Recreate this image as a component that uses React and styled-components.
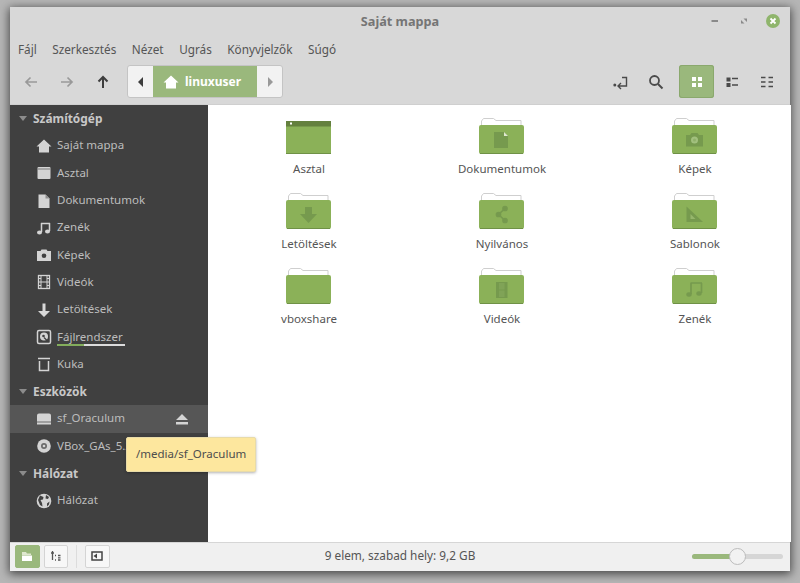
import React from "react";
import styled, { createGlobalStyle } from "styled-components";

const GlobalStyle = createGlobalStyle`
  html, body {
    margin: 0;
    height: 100%;
    overflow: hidden;
    background: #b6b6b6;
    font-family: "Noto Sans", sans-serif;
  }
`;

const GREEN = "#9ab87c";
const FOLDER = "#8bb158";
const FOLDER_EDGE = "#6f9146";
const MARK = "#769a4e";

// Window frame

const Window = styled.div`
  position: relative;
  display: flex;
  flex-direction: column;
  width: 780px;
  height: 564px;
  margin: 7px 10px 0;
  background: #d8d8d8;
  box-shadow: 0 2px 9px 1px rgba(0, 0, 0, 0.62);
`;

const TitleBar = styled.div`
  display: flex;
  align-items: center;
  justify-content: center;
  position: relative;
  height: 30px;
  padding-bottom: 2px;
  box-sizing: border-box;
  flex: none;
`;

const Title = styled.div`
  font-size: 12.7px;
  font-weight: 700;
  color: #757575;
`;

const WindowControls = styled.div`
  position: absolute;
  top: 5.5px;
  right: 9px;
  display: flex;
  align-items: center;
  gap: 13px;
`;

const MenuBar = styled.div`
  display: flex;
  align-items: center;
  gap: 15.5px;
  height: 23px;
  padding: 0 8px;
  flex: none;
`;

const MenuItem = styled.span`
  font-size: 11.75px;
  color: #555;
`;

// Toolbar

const Toolbar = styled.div`
  display: flex;
  align-items: center;
  height: 45px;
  padding: 0 6px 1px 3px;
  flex: none;
  box-sizing: border-box;
  border-bottom: 1px solid #cfcfcf;
`;

const NavButton = styled.div`
  display: flex;
  align-items: center;
  justify-content: center;
  width: 36px;
  height: 33px;
`;

const PathBar = styled.div`
  display: flex;
  height: 33px;
  margin-left: 6px;
  box-sizing: border-box;
  border: 1px solid #c4c4c4;
  border-radius: 3px;
  background: #f2f2f2;
  overflow: hidden;
`;

const PathArrow = styled.div`
  display: flex;
  align-items: center;
  justify-content: center;
  width: 25px;
`;

const PathCrumb = styled.div`
  display: flex;
  align-items: center;
  gap: 6px;
  width: 104px;
  padding-left: 10px;
  box-sizing: border-box;
  background: ${GREEN};
  color: #fff;
  font-size: 12px;
  font-weight: 700;
`;

const ToolSpacer = styled.div`
  flex: 1;
`;

const ToolButton = styled.div`
  display: flex;
  align-items: center;
  justify-content: center;
  width: 35px;
  height: 33px;
  margin-left: ${(p) => p.$gap || 0}px;
  border-radius: 3px;
  background: ${(p) => (p.$active ? GREEN : "transparent")};
  box-shadow: ${(p) => (p.$active ? "inset 0 0 0 1px #8aa86d" : "none")};
`;

// Sidebar

const Main = styled.div`
  display: flex;
  flex: 1;
  min-height: 0;
`;

const Sidebar = styled.div`
  width: 198px;
  flex: none;
  background: #404040;
  overflow: hidden;
`;

const SectionHead = styled.div`
  display: flex;
  align-items: center;
  gap: 6px;
  height: 27.3px;
  padding-left: 9px;
`;

const SectionLabel = styled.span`
  padding-bottom: 2px;
  font-size: 11.9px;
  font-weight: 700;
  color: #c8c8c8;
`;

const Caret = styled.div`
  width: 0;
  height: 0;
  border-left: 4.5px solid transparent;
  border-right: 4.5px solid transparent;
  border-top: 5px solid #8c8c8c;
`;

const Row = styled.div`
  display: flex;
  align-items: center;
  height: 27.3px;
  padding-left: 26px;
  padding-right: 19px;
  background: ${(p) => (p.$hover ? "#565656" : "transparent")};
  white-space: nowrap;
`;

const RowIcon = styled.div`
  display: flex;
  align-items: center;
  justify-content: center;
  width: 16px;
  height: 16px;
  margin-right: 5px;
  flex: none;
`;

const RowText = styled.div`
  flex: 1;
  position: relative;
  padding-bottom: 2px;
  font-size: 11.5px;
  color: #bdbdbd;
`;

const UsageBar = styled.div`
  position: absolute;
  left: 0;
  bottom: 0;
  width: 68px;
  height: 2px;
  background: linear-gradient(to right, #83ad5c 40%, #dcdcdc 40%);
`;

const Tooltip = styled.div`
  position: absolute;
  left: 116px;
  top: 430px;
  display: flex;
  align-items: center;
  width: 130px;
  height: 35px;
  padding: 0 0 2px 9px;
  box-sizing: border-box;
  background: #fde79e;
  border: 1px solid #e8dba8;
  border-radius: 2px;
  box-shadow: 0 1px 3px rgba(0, 0, 0, 0.3);
  font-size: 11.5px;
  color: #4d4d4d;
`;

// Icon grid

const Content = styled.div`
  flex: 1;
  background: #fff;
  display: grid;
  grid-template-columns: repeat(3, 193px);
  grid-auto-rows: 75px;
  padding: 13px 0 0 4px;
  align-content: start;
`;

const Item = styled.div`
  display: flex;
  flex-direction: column;
  align-items: center;
`;

const ItemLabel = styled.div`
  margin-top: 6px;
  padding-left: 1px;
  font-size: 11.5px;
  line-height: 17px;
  color: #555;
`;

// Status bar

const StatusBar = styled.div`
  position: relative;
  display: flex;
  align-items: center;
  height: 29px;
  padding: 0 7px 2px 5px;
  flex: none;
  box-sizing: border-box;
  background: #f0f0f0;
  border-top: 1px solid #d6d6d6;
`;

const StatusButton = styled.div`
  display: flex;
  align-items: center;
  justify-content: center;
  width: 24.5px;
  height: 23px;
  margin-right: ${(p) => p.$after || 0}px;
  box-sizing: border-box;
  border-radius: 2px;
  background: ${(p) => (p.$active ? GREEN : "#f7f7f7")};
  border: 1px solid ${(p) => (p.$active ? GREEN : "#d4d4d4")};
`;

const StatusDivider = styled.div`
  width: 1px;
  height: 23px;
  margin: 0 8px;
  background: #dcdcdc;
`;

const StatusText = styled.div`
  position: absolute;
  left: 0;
  right: 0;
  padding-bottom: 2px;
  text-align: center;
  font-size: 11.8px;
  color: #555;
  pointer-events: none;
`;

const Slider = styled.div`
  position: relative;
  width: 91px;
  height: 5px;
  margin-left: auto;
  border-radius: 3px;
  background: #d6d6d6;
`;

const SliderFill = styled.div`
  height: 100%;
  border-radius: 3px;
  background: ${GREEN};
`;

const SliderKnob = styled.div`
  position: absolute;
  top: -6px;
  width: 17px;
  height: 17px;
  box-sizing: border-box;
  border-radius: 50%;
  background: #f2f2f2;
  border: 1px solid #bcbcbc;
`;

// Drawings

const Svg = ({ w = 16, h = 16, children, ...rest }) => (
  <svg width={w} height={h} viewBox={`0 0 ${w} ${h}`} {...rest}>
    {children}
  </svg>
);

const ArrowLeft = ({ color }) => (
  <Svg>
    <path d="M14 8H3M7.500 3.500 3 8l4.500 4.500" fill="none" stroke={color} strokeWidth="1.700" />
  </Svg>
);

const ArrowRight = ({ color }) => (
  <Svg>
    <path d="M2 8h11M8.500 3.500 13 8l-4.500 4.500" fill="none" stroke={color} strokeWidth="1.700" />
  </Svg>
);

const ArrowUp = ({ color }) => (
  <Svg>
    <path d="M8 14V3M3.500 7.500 8 3l4.500 4.500" fill="none" stroke={color} strokeWidth="2" />
  </Svg>
);

const HomeGlyph = ({ color }) => (
  <Svg>
    <path d="M8 1.500 .5 8.500H3V14.500H13V8.500h2.500z" fill={color} />
  </Svg>
);

const sideIcons = {
  home: <HomeGlyph color="#d4d4d4" />,
  desktop: (
    <Svg>
      <rect x="1.500" y="2" width="13" height="12" rx="1" fill="#d4d4d4" />
      <rect x="1.500" y="3.500" width="13" height="1" fill="#777" />
    </Svg>
  ),
  doc: (
    <Svg>
      <path d="M2.500 1.500h7l4 4v9.500h-11z" fill="#d4d4d4" />
      <path d="M9.500 1.500v4h4z" fill="#8f8f8f" />
    </Svg>
  ),
  music: (
    <Svg>
      <path d="M5 3.500h9M5.500 12V3M13.500 11V3" fill="none" stroke="#d4d4d4" strokeWidth="1.500" />
      <ellipse cx="3.500" cy="12.500" rx="2.500" ry="2" fill="#d4d4d4" />
      <ellipse cx="11.500" cy="11.500" rx="2.500" ry="2" fill="#d4d4d4" />
    </Svg>
  ),
  camera: (
    <Svg>
      <path d="M1 4h3.500l1-1.500h5L11.500 4H15v10H1z" fill="#d4d4d4" />
      <circle cx="8" cy="8.700" r="2.300" fill="#404040" />
    </Svg>
  ),
  film: (
    <Svg>
      <rect x="2.500" y="1.500" width="11" height="13" fill="none" stroke="#d4d4d4" strokeWidth="1.300" />
      <path d="M5 1.500v13M11 1.500v13M5 8h6M2.500 4.500H5M2.500 8H5M2.500 11.500H5M11 4.500h2.500M11 8h2.500M11 11.500h2.500" stroke="#d4d4d4" strokeWidth="1" fill="none" />
    </Svg>
  ),
  download: (
    <Svg>
      <path d="M6.500 1.500h3v7.500H14l-6 6-6-6h4.500z" fill="#d8d8d8" />
    </Svg>
  ),
  disk: (
    <Svg>
      <rect x="1.500" y="1.500" width="13" height="13" rx="1.500" fill="none" stroke="#d4d4d4" strokeWidth="1.500" />
      <circle cx="8" cy="7.500" r="4" fill="#d4d4d4" />
      <circle cx="7.500" cy="7" r="1.300" fill="#404040" />
      <path d="M8 8.500l3.500 3.500" stroke="#404040" strokeWidth="1.300" />
    </Svg>
  ),
  trash: (
    <Svg>
      <path d="M2 2.500h12" stroke="#d4d4d4" strokeWidth="1.500" />
      <path d="M3.500 5v9.500h9V5" fill="none" stroke="#d4d4d4" strokeWidth="1.500" />
    </Svg>
  ),
  drive: (
    <Svg>
      <path d="M3 2.500h10a2 2 0 0 1 2 2v9H1v-9a2 2 0 0 1 2-2z" fill="#d4d4d4" />
      <rect x="1" y="10.500" width="14" height="1" fill="#6a6a6a" />
    </Svg>
  ),
  optical: (
    <Svg>
      <circle cx="8" cy="8" r="6.800" fill="#d4d4d4" />
      <circle cx="8" cy="8" r="3" fill="#6b6b6b" />
      <circle cx="8" cy="8" r="1.300" fill="#d4d4d4" />
    </Svg>
  ),
  globe: (
    <Svg>
      <circle cx="8" cy="8" r="7.300" fill="#d4d4d4" />
      <path d="M4 2.500 7.500 4 7 6.500 4.500 7l1.500 3 .5 3.500L4 12 2 7zM10 2l3 2-1 2-2.500-.5zM13.500 8.500l-.5 3-2 2 0-3z" fill="#404040" />
    </Svg>
  ),
};

const folderMarks = {
  doc: (
    <g>
      <path d="M15 14h10l4 4v12H15z" fill={MARK} />
      <path d="M25 14v4h4z" fill="#dfe8cf" />
    </g>
  ),
  camera: (
    <g>
      <path d="M14 17h4l1.500-2h6l1.500 2h4v11.500H14z" fill={MARK} />
      <circle cx="22.500" cy="22" r="3.500" fill="#a2c07e" />
      <circle cx="22.500" cy="22" r="1.500" fill={MARK} opacity=".4" />
    </g>
  ),
  download: <path d="M19 14h7v7h5l-8.500 9L14 21h5z" fill={MARK} />,
  share: (
    <g fill={MARK} stroke={MARK} strokeWidth="1.700">
      <circle cx="26" cy="15.500" r="2" />
      <circle cx="26" cy="27.500" r="2" />
      <circle cx="19.500" cy="21.500" r="2" />
      <path d="M26 15.500 19.500 21.500 26 27.500" fill="none" />
    </g>
  ),
  template: (
    <g>
      <path d="M14.500 13.500 31 29H14.500z" fill={MARK} />
      <path d="M18.500 21 23.500 26H18.500z" fill="#96b66c" />
    </g>
  ),
  film: (
    <g>
      <rect x="17" y="14" width="11.500" height="16" fill={MARK} />
      <path d="M20 15h5.500v6.500H20zM20 22.500h5.500V29H20z" fill="#80a357" />
    </g>
  ),
  music: (
    <g>
      <path d="M18.500 15H30M19 26V15M29.500 25V15" fill="none" stroke={MARK} strokeWidth="1.700" />
      <ellipse cx="17" cy="26.500" rx="2.700" ry="2.200" fill={MARK} />
      <ellipse cx="27" cy="25.500" rx="2.700" ry="2.200" fill={MARK} />
    </g>
  ),
};

const FolderIcon = ({ mark, desktop }) =>
  desktop ? (
    <Svg w={45} h={36}>
      <rect x="0" y="3" width="45" height="33" rx="1.500" fill={FOLDER} />
      <rect x="0" y="3" width="45" height="5.500" fill="#64803e" />
      <rect x="4" y="4.500" width="2" height="2" fill="#fff" />
      <rect x="0" y="35" width="45" height="1" fill={FOLDER_EDGE} />
    </Svg>
  ) : (
    <Svg w={45} h={36}>
      <path d="M2.500 7V3l2-2.500h10L17 2.500h25V7" fill="#fff" stroke="#cfcfcf" strokeWidth="1" />
      <rect x="0" y="7" width="45" height="29" rx="2" fill={FOLDER} />
      <rect x="1" y="35" width="43" height="1" fill={FOLDER_EDGE} />
      {folderMarks[mark]}
    </Svg>
  );

const sidebarSections = [
  {
    title: "Számítógép",
    rows: [
      { icon: "home", text: "Saját mappa" },
      { icon: "desktop", text: "Asztal" },
      { icon: "doc", text: "Dokumentumok" },
      { icon: "music", text: "Zenék" },
      { icon: "camera", text: "Képek" },
      { icon: "film", text: "Videók" },
      { icon: "download", text: "Letöltések" },
      { icon: "disk", text: "Fájlrendszer", usage: true },
      { icon: "trash", text: "Kuka" },
    ],
  },
  {
    title: "Eszközök",
    rows: [
      { icon: "drive", text: "sf_Oraculum", hover: true, eject: true },
      { icon: "optical", text: "VBox_GAs_5.2.6" },
    ],
  },
  {
    title: "Hálózat",
    rows: [{ icon: "globe", text: "Hálózat" }],
  },
];

const items = [
  { label: "Asztal", desktop: true },
  { label: "Dokumentumok", mark: "doc" },
  { label: "Képek", mark: "camera" },
  { label: "Letöltések", mark: "download" },
  { label: "Nyilvános", mark: "share" },
  { label: "Sablonok", mark: "template" },
  { label: "vboxshare" },
  { label: "Videók", mark: "film" },
  { label: "Zenék", mark: "music" },
];

const menus = ["Fájl", "Szerkesztés", "Nézet", "Ugrás", "Könyvjelzők", "Súgó"];

export default function App() {
  return (
    <>
      <GlobalStyle />
      <Window>
        <TitleBar>
          <Title>Saját mappa</Title>
          <WindowControls>
            <Svg>
              <path d="M4.500 8h6.500" stroke="#8a8a8a" strokeWidth="2" />
            </Svg>
            <Svg>
              <path d="M5 7V10.500H8.500zM11 9V5.500H7.500z" fill="#8a8a8a" />
            </Svg>
            <Svg>
              <circle cx="8" cy="8" r="7" fill="#8fb56c" />
              <path d="M5.500 5.500l5 5M10.500 5.500l-5 5" stroke="#fff" strokeWidth="1.800" />
            </Svg>
          </WindowControls>
        </TitleBar>

        <MenuBar>
          {menus.map((menu) => (
            <MenuItem key={menu}>{menu}</MenuItem>
          ))}
        </MenuBar>

        <Toolbar>
          <NavButton>
            <ArrowLeft color="#999" />
          </NavButton>
          <NavButton>
            <ArrowRight color="#999" />
          </NavButton>
          <NavButton>
            <ArrowUp color="#3d3d3d" />
          </NavButton>
          <PathBar>
            <PathArrow>
              <Svg w={8} h={12}>
                <path d="M6 1v10L1 6z" fill="#3d3d3d" />
              </Svg>
            </PathArrow>
            <PathCrumb>
              <HomeGlyph color="#fff" />
              linuxuser
            </PathCrumb>
            <PathArrow>
              <Svg w={8} h={12}>
                <path d="M2 1v10l5-5z" fill="#999" />
              </Svg>
            </PathArrow>
          </PathBar>
          <ToolSpacer />
          <ToolButton>
            <Svg>
              <circle cx="1.800" cy="11" r="1.500" fill="#4a4a4a" />
              <path d="M9 3.500h4.500V12H5M8 9l-3 3 3 3" fill="none" stroke="#4a4a4a" strokeWidth="1.400" />
            </Svg>
          </ToolButton>
          <ToolButton>
            <Svg>
              <circle cx="6.500" cy="6.500" r="4.500" fill="none" stroke="#4a4a4a" strokeWidth="1.800" />
              <path d="M10 10l4.500 4.500" stroke="#4a4a4a" strokeWidth="2" />
            </Svg>
          </ToolButton>
          <ToolButton $active $gap={6}>
            <Svg>
              <path d="M3 3h4v4H3zM9 3h4v4H9zM3 9h4v4H3zM9 9h4v4H9z" fill="#fff" />
            </Svg>
          </ToolButton>
          <ToolButton>
            <Svg>
              <path d="M2.500 3.500h4v4h-4zM2.500 9h4v4h-4z" fill="#4a4a4a" />
              <path d="M8 4.500h6M8 11h6" stroke="#4a4a4a" strokeWidth="1.500" />
            </Svg>
          </ToolButton>
          <ToolButton>
            <Svg>
              <path d="M2 3.500h4.500M2 8h4.500M2 12.500h4.500M9.500 3.500H14M9.500 8H14M9.500 12.500H14" stroke="#4a4a4a" strokeWidth="1.700" />
            </Svg>
          </ToolButton>
        </Toolbar>

        <Main>
          <Sidebar>
            {sidebarSections.map((section) => (
              <div key={section.title}>
                <SectionHead>
                  <Caret />
                  <SectionLabel>{section.title}</SectionLabel>
                </SectionHead>
                {section.rows.map((row) => (
                  <Row key={row.text} $hover={row.hover}>
                    <RowIcon>{sideIcons[row.icon]}</RowIcon>
                    <RowText>
                      {row.text}
                      {row.usage && <UsageBar />}
                    </RowText>
                    {row.eject && (
                      <Svg w={14} h={14}>
                        <path d="M7 2l6 6H1zM1 10h12v2.500H1z" fill="#d4d4d4" />
                      </Svg>
                    )}
                  </Row>
                ))}
              </div>
            ))}
          </Sidebar>
          <Content>
            {items.map((item) => (
              <Item key={item.label}>
                <FolderIcon mark={item.mark} desktop={item.desktop} />
                <ItemLabel>{item.label}</ItemLabel>
              </Item>
            ))}
          </Content>
        </Main>

        <StatusBar>
          <StatusButton $active $after={4}>
            <Svg w={12} h={12}>
              <path d="M1 2h4l1 1.500h4V5H1z" fill="#dfe8cf" />
              <path d="M1 5.500h10V11H1z" fill="#fff" />
            </Svg>
          </StatusButton>
          <StatusButton>
            <Svg w={12} h={12}>
              <path d="M2.500 1v9M1 3h3M5 5.500h1M5 10h1M8 5.500h2.500M8 10h2.500M8 7.800h2.500" stroke="#555" strokeWidth="1.300" />
            </Svg>
          </StatusButton>
          <StatusDivider />
          <StatusButton>
            <Svg w={12} h={12}>
              <rect x="1" y="2" width="10" height="8" fill="none" stroke="#444" strokeWidth="1.500" />
              <path d="M6 3.500v5L2.500 6z" fill="#444" />
            </Svg>
          </StatusButton>
          <StatusText>9 elem, szabad hely: 9,2 GB</StatusText>
          <Slider>
            <SliderFill style={{ width: "50%" }} />
            <SliderKnob style={{ left: "calc(50% - 8.500px)" }} />
          </Slider>
        </StatusBar>

        <Tooltip>/media/sf_Oraculum</Tooltip>
      </Window>
    </>
  );
}
